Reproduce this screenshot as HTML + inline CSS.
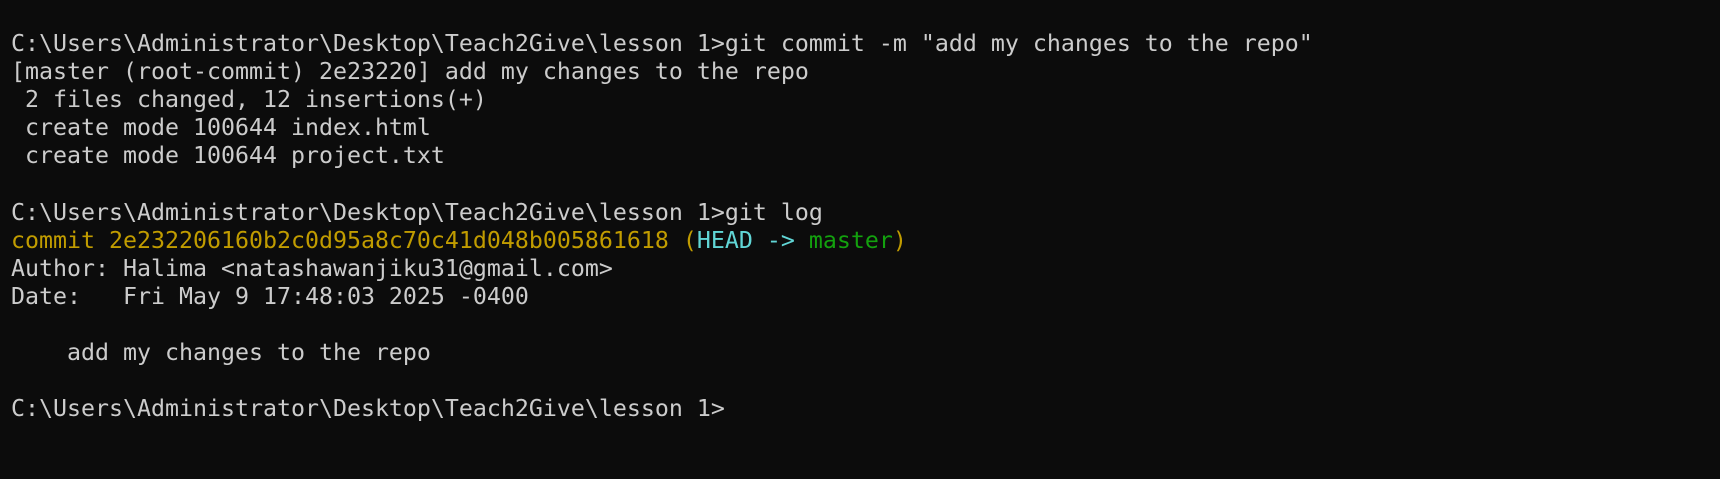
<!DOCTYPE html>
<html><head><meta charset="utf-8"><style>
html,body{margin:0;padding:0;background:#0c0c0c;}
body{width:1720px;height:479px;overflow:hidden;}
pre{margin:0;position:absolute;left:11px;top:30px;font-family:"DejaVu Sans Mono","Liberation Mono",monospace;font-size:23.25px;line-height:28.1px;color:#cccccc;white-space:pre;}
.y{color:#c19c00}.c{color:#61d6d6}.g{color:#13a10e}
</style></head><body><pre>C:\Users\Administrator\Desktop\Teach2Give\lesson 1&gt;git commit -m "add my changes to the repo"
[master (root-commit) 2e23220] add my changes to the repo
 2 files changed, 12 insertions(+)
 create mode 100644 index.html
 create mode 100644 project.txt

C:\Users\Administrator\Desktop\Teach2Give\lesson 1&gt;git log
<span class="y">commit 2e232206160b2c0d95a8c70c41d048b005861618 (</span><span class="c">HEAD -&gt; </span><span class="g">master</span><span class="y">)</span>
Author: Halima &lt;natashawanjiku31@gmail.com&gt;
Date:   Fri May 9 17:48:03 2025 -0400

    add my changes to the repo

C:\Users\Administrator\Desktop\Teach2Give\lesson 1&gt;</pre></body></html>
